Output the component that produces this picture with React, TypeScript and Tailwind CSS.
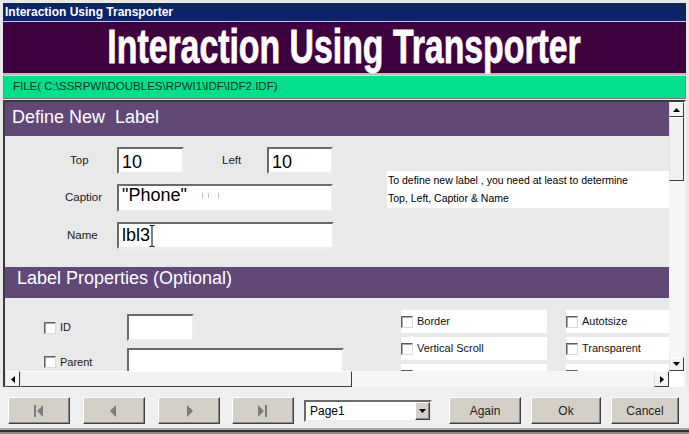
import React from 'react';

const sunken =
  'bg-white border-2 border-t-[#6a6a6a] border-l-[#6a6a6a] border-r-[#ececec] border-b-[#ececec]';
const raised =
  'bg-[#d4d0c8] border border-t-white border-l-white border-r-[#404040] border-b-[#404040] shadow-[inset_-1px_-1px_0_#8a8a8a]';
const scrollBtn =
  'bg-[#f4f4f4] border border-t-white border-l-[#e0e0e0] border-r-[#3c3c3c] border-b-[#3c3c3c] flex items-center justify-center shrink-0';

const Check = () => (
  <span className="w-[12px] h-[12px] shrink-0 bg-white border border-t-[#5e5e5e] border-l-[#5e5e5e] border-r-[#dadada] border-b-[#dadada] shadow-[inset_1px_1px_0_#a8a8a8]" />
);

const Arrow = ({ dir }: { dir: 'up' | 'down' | 'left' | 'right' }) => {
  const pts = {
    up: '0,4 3.5,0 7,4',
    down: '0,0 7,0 3.5,4',
    left: '4,0 4,7 0,3.5',
    right: '0,0 4,3.5 0,7',
  }[dir];
  const vert = dir === 'up' || dir === 'down';
  return (
    <svg width={vert ? 7 : 4} height={vert ? 4 : 7} viewBox={vert ? '0 0 7 4' : '0 0 4 7'}>
      <polygon points={pts} fill="#000" />
    </svg>
  );
};

const NavIcon = ({ kind }: { kind: 'first' | 'prev' | 'next' | 'last' }) => (
  <svg width="10" height="12" viewBox="0 0 10 12">
    {kind === 'first' && (
      <>
        <rect x="0" y="0" width="2" height="12" fill="#7c7c7c" />
        <polygon points="9,0 3,6 9,12" fill="#7c7c7c" />
      </>
    )}
    {kind === 'prev' && <polygon points="7,0 1,6 7,12" fill="#7c7c7c" />}
    {kind === 'next' && <polygon points="3,0 9,6 3,12" fill="#7c7c7c" />}
    {kind === 'last' && (
      <>
        <polygon points="0,0 6,6 0,12" fill="#7c7c7c" />
        <rect x="7" y="0" width="2" height="12" fill="#7c7c7c" />
      </>
    )}
  </svg>
);

const OptionBox = ({ label }: { label?: string }) => (
  <div className="h-[23px] bg-white flex items-center gap-[4px] text-[11px] text-[#111] whitespace-nowrap overflow-hidden">
    <Check />
    {label}
  </div>
);

export default function App() {
  return (
    <div className="w-[689px] h-[434px] overflow-hidden bg-[#e9e9e9] px-[3px] pt-[3px] flex flex-col font-['Liberation_Sans',Arial,sans-serif]">
      {/* window title */}
      <div className="h-[18px] shrink-0 bg-[#0c2468] text-white font-bold text-[12px] flex items-center pl-[2px]">
        Interaction Using Transporter
      </div>
      <div className="h-[1px] shrink-0 bg-[#c8c8d4]" />

      {/* banner */}
      <div className="h-[51px] shrink-0 bg-[#3f0040] flex items-center justify-center pb-[3px]">
        <span className="inline-block whitespace-nowrap font-bold text-white text-[49px] leading-none scale-x-[0.69] [-webkit-text-stroke:0.8px_white]">
          Interaction Using Transporter
        </span>
      </div>
      <div className="h-[2px] shrink-0 bg-[#bdbdbd]" />

      {/* file path */}
      <div className="h-[24px] shrink-0 bg-[#02df8a] border border-t-[#a8f0cc] border-l-[#8a8a8a] border-r-[#8a8a8a] border-b-[#7a7a7a] flex items-center pl-[9px] text-[11.5px] text-[#143020]">
        {'FILE( C:\\SSRPWI\\DOUBLES\\RPWI1\\IDF\\IDF2.IDF)'}
      </div>
      <div className="h-[1px] shrink-0" />

      {/* scroll pane */}
      <div className="shrink-0 flex flex-col border-t-2 border-l-2 border-t-[#3a3a3a] border-l-[#3a3a3a] border-r-2 border-r-[#f2f2f2]">
        <div className="flex">
          <div className="w-[664px] h-[269px] overflow-hidden bg-[#e9e9e9] flex flex-col">
            {/* Define New Label */}
            <div className="h-[34px] shrink-0 bg-[#614878] text-white text-[18px] leading-none flex items-center pl-[7px] pb-[4px] whitespace-pre">
              Define New  Label
            </div>
            <div className="h-[131px] shrink-0 flex">
              <div className="w-[382px] pt-[11px] flex flex-col text-[11.5px] text-[#1a1a1a]">
                <div className="flex items-center h-[27px]">
                  <div className="w-[112px] pl-[65px]">Top</div>
                  <div className={`${sunken} w-[67px] h-[27px] flex items-center pl-[3px] pt-[3px] text-[18px] text-black`}>10</div>
                  <div className="w-[83px] pl-[38px]">Left</div>
                  <div className={`${sunken} w-[66px] h-[27px] flex items-center pl-[3px] pt-[3px] text-[18px] text-black`}>10</div>
                </div>
                <div className="flex items-center h-[28px] mt-[10px]">
                  <div className="w-[112px] pl-[60px] whitespace-nowrap">Captior</div>
                  <div className={`${sunken} w-[216px] h-[28px] flex items-center pl-[3px] pb-[6px] text-[18px] text-black`}>
                    "Phone"
                    <span className="ml-[15px] w-[1px] h-[5px] bg-[#c4c4c4]" />
                    <span className="ml-[5px] w-[1px] h-[5px] bg-[#c4c4c4]" />
                    <span className="ml-[9px] w-[1px] h-[5px] bg-[#c4c4c4]" />
                  </div>
                </div>
                <div className="flex items-center h-[27px] mt-[10px]">
                  <div className="w-[112px] pl-[62px]">Name</div>
                  <div className={`${sunken} relative w-[217px] h-[27px] flex items-center pl-[3px] pb-[1px] text-[18px] text-black`}>
                    lbl3
                    <svg className="absolute left-[30px] top-[1px]" width="6" height="22" viewBox="0 0 6 22">
                      <path d="M0.5 0.5 H2.5 L3 1.5 L3.5 0.5 H5.5 M3 1.5 V20.5 M0.5 21.5 H2.5 L3 20.5 L3.5 21.5 H5.5" stroke="#000" strokeWidth="1" fill="none" />
                    </svg>
                  </div>
                </div>
              </div>
              <div className="flex-1">
                <div className="mt-[35px] h-[37px] bg-white pl-[1px] text-[10.5px] leading-[18px] text-black whitespace-nowrap">
                  <div>To define new label , you need at least to determine</div>
                  <div>Top, Left, Captior &amp; Name</div>
                </div>
              </div>
            </div>

            {/* Label Properties */}
            <div className="h-[31px] shrink-0 bg-[#614878] text-white text-[18px] leading-none flex items-center pl-[12px] pb-[10px]">
              Label Properties (Optional)
            </div>
            <div className="flex-1 flex overflow-hidden">
              <div className="w-[396px] pt-[16px] flex flex-col text-[11px] text-[#1a1a1a]">
                <div className="flex items-center h-[27px]">
                  <div className="w-[122px] pl-[39px] flex items-center gap-[4px]">
                    <Check />
                    ID
                  </div>
                  <div className={`${sunken} w-[67px] h-[27px]`} />
                </div>
                <div className="flex items-start h-[26px] mt-[7px]">
                  <div className="w-[122px] pl-[39px] pt-[6px] flex items-center gap-[4px]">
                    <Check />
                    Parent
                  </div>
                  <div className={`${sunken} w-[217px] h-[26px]`} />
                </div>
              </div>
              <div className="pt-[12px] grid grid-cols-[146px_103px] gap-x-[19px] gap-y-[4px] content-start">
                <OptionBox label="Border" />
                <OptionBox label="Autotsize" />
                <OptionBox label="Vertical Scroll" />
                <OptionBox label="Transparent" />
                <OptionBox />
                <OptionBox />
              </div>
            </div>
          </div>

          {/* vertical scrollbar */}
          <div className="w-[15px] h-[269px] flex flex-col bg-[#f6f6f6]">
            <div className={`${scrollBtn} h-[15px]`}>
              <Arrow dir="up" />
            </div>
            <div className="h-[64px] shrink-0 bg-[#f0f0f0] border border-t-white border-l-[#e4e4e4] border-r-[#3c3c3c] border-b-[#3c3c3c]" />
            <div className="flex-1" />
            <div className={`${scrollBtn} h-[14px]`}>
              <Arrow dir="down" />
            </div>
          </div>
        </div>

        {/* horizontal scrollbar */}
        <div className="flex h-[16px]">
          <div className="w-[664px] flex bg-[#f6f6f6]">
            <div className={`${scrollBtn} w-[15px]`}>
              <Arrow dir="left" />
            </div>
            <div className="w-[332px] shrink-0 bg-[#f2f2f2] border border-t-white border-l-[#e4e4e4] border-r-[#3c3c3c] border-b-[#3c3c3c]" />
            <div className="flex-1" />
            <div className={`${scrollBtn} w-[15px]`}>
              <Arrow dir="right" />
            </div>
          </div>
          <div className="w-[15px] bg-white" />
        </div>
      </div>

      {/* navigation / action buttons */}
      <div className="h-[41px] shrink-0 flex items-start pt-[10px] text-[12px] text-[#1e1e1e] bg-[#efefef] -mx-[3px] px-[3px]">
        <button className={`${raised} ml-[5px] w-[62px] h-[27px] flex items-center justify-center`}>
          <NavIcon kind="first" />
        </button>
        <button className={`${raised} ml-[13px] w-[62px] h-[27px] flex items-center justify-center`}>
          <NavIcon kind="prev" />
        </button>
        <button className={`${raised} ml-[13px] w-[62px] h-[27px] flex items-center justify-center`}>
          <NavIcon kind="next" />
        </button>
        <button className={`${raised} ml-[12px] w-[62px] h-[27px] flex items-center justify-center`}>
          <NavIcon kind="last" />
        </button>
        <div className={`${sunken} ml-[10px] mt-[3px] w-[128px] h-[22px] flex items-center`}>
          <span className="flex-1 pl-[4px] text-[12px] text-black">Page1</span>
          <span className={`${raised} w-[15px] h-[18px] flex items-center justify-center`}>
            <Arrow dir="down" />
          </span>
        </div>
        <button className={`${raised} ml-[17px] w-[72px] h-[27px] flex items-center justify-center`}>Again</button>
        <button className={`${raised} ml-[10px] w-[70px] h-[27px] flex items-center justify-center`}>Ok</button>
        <button className={`${raised} ml-[10px] w-[68px] h-[27px] flex items-center justify-center`}>Cancel</button>
      </div>

      {/* bottom window frame */}
      <div className="-mx-[3px] shrink-0 flex flex-col">
        <div className="h-[2px] bg-[#a8a8a8]" />
        <div className="h-[2px] bg-[#2e2e2e]" />
        <div className="h-[2px] bg-[#8a8a8a]" />
      </div>
    </div>
  );
}
